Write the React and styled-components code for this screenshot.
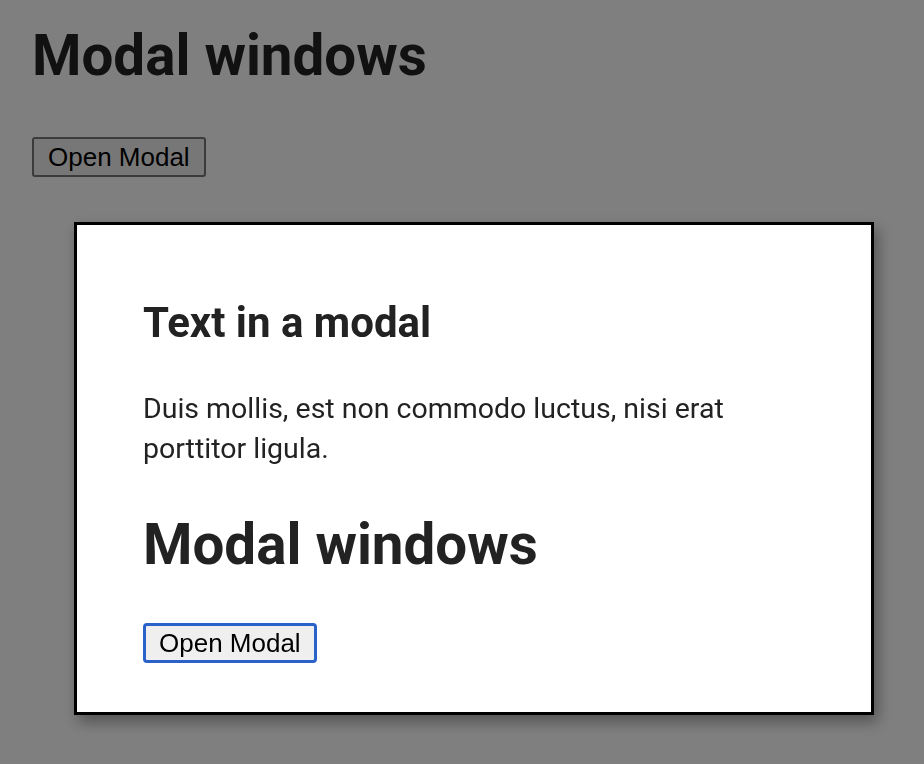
import React from "react";
import styled, { createGlobalStyle } from "styled-components";

const GlobalStyle = createGlobalStyle`
  html, body {
    margin: 0;
    padding: 0;
    background: #ffffff;
  }
  body {
    font-family: Roboto, "Noto Sans", sans-serif;
    color: #222222;
  }
`;

const Page = styled.main`
  padding: 22px 32px;
  display: flex;
  flex-direction: column;
  align-items: flex-start;
`;

const Title = styled.h1`
  margin: 0 0 ${(p) => p.$gap}px;
  font-family: Roboto, sans-serif;
  font-weight: 700;
  font-size: 56.5px;
  line-height: 68px;
  color: #222222;
`;

const Button = styled.button`
  box-sizing: border-box;
  height: 40px;
  padding: 0 14px;
  font-family: "Liberation Sans", Arial, sans-serif;
  font-size: 26px;
  color: #000;
  background: #efefef;
  border: 2px solid #767676;
  border-radius: 3px;
  cursor: pointer;

  &.focused {
    border: 3px solid #2a62c9;
    border-radius: 4px;
    padding: 0 13px;
  }
`;

const Overlay = styled.div`
  position: fixed;
  inset: 0;
  background: rgba(0, 0, 0, 0.5);
  display: flex;
  align-items: flex-start;
  padding: 222px 0 0 74px;
`;

const Modal = styled.div`
  box-sizing: border-box;
  width: 800px;
  height: 493px;
  background: #ffffff;
  border: 3px solid #000;
  box-shadow: 4px 7px 14px rgba(0, 0, 0, 0.35);
  padding: 73px 66px 0;
  display: flex;
  flex-direction: column;
  align-items: flex-start;
`;

const Heading = styled.h2`
  margin: 0 0 41px;
  font-weight: 700;
  font-size: 42px;
  line-height: 50px;
`;

const Text = styled.p`
  margin: 0 0 42px;
  font-size: 28.5px;
  line-height: 40px;
`;

export default function App() {
  return (
    <>
      <GlobalStyle />
      <Page>
        <Title $gap={47}>Modal windows</Title>
        <Button>Open Modal</Button>
      </Page>
      <Overlay>
        <Modal role="dialog" aria-modal="true">
          <Heading>Text in a modal</Heading>
          <Text>
            Duis mollis, est non commodo luctus, nisi erat porttitor ligula.
          </Text>
          <Title $gap={44}>Modal windows</Title>
          <Button className="focused">Open Modal</Button>
        </Modal>
      </Overlay>
    </>
  );
}
